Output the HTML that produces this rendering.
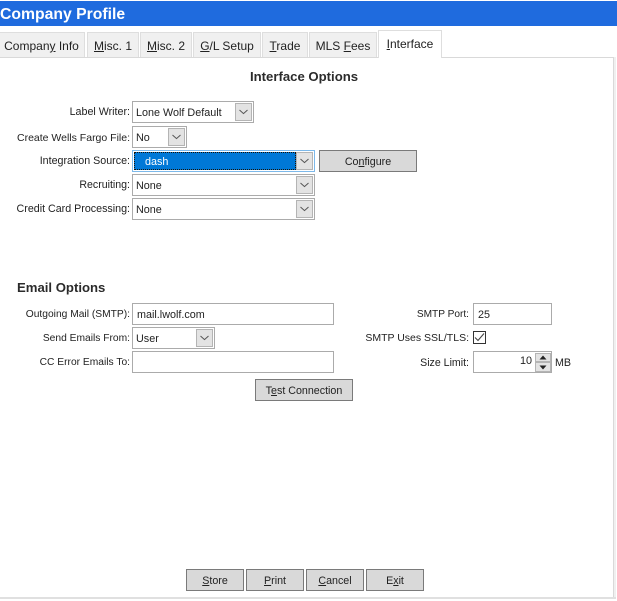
<!DOCTYPE html>
<html><head><meta charset="utf-8">
<style>
html,body{margin:0;padding:0;background:#fff;}
body{width:617px;height:601px;position:relative;overflow:hidden;font-family:"Liberation Sans",Arial,sans-serif;font-size:10.7px;color:#222;}
div{position:absolute;box-sizing:border-box;white-space:nowrap;}
.tab{top:32px;height:25px;background:#f0f0f0;border:1px solid #dedede;border-bottom:none;line-height:27px;text-align:center;font-size:12px;}
.l{right:0;height:16px;line-height:16px;text-align:right;}
.sel,.inp{border:1px solid #ababab;background:#fff;height:22px;line-height:22px;padding-left:3px;font-size:10.8px;}
.ar{right:1px;top:1px;width:17px;height:18px;background:#e3e3e3;border:1px solid #b4b4b4;}
.ar svg{position:absolute;left:3px;top:5px;}
.btn{background:#d9d9d9;border:1px solid #7a7a7a;height:22px;line-height:23px;text-align:center;}
h3{position:absolute;margin:0;font-size:13.15px;font-weight:bold;color:#2b2b2b;white-space:nowrap;line-height:16px;}
</style></head>
<body>
<div style="left:0;top:1px;width:617px;height:25px;background:#1f6bde;color:#fff;font-weight:bold;font-size:15.75px;line-height:27px;">Company Profile</div>

<div style="left:0;top:57px;width:614px;height:541px;border-right:1px solid #d9d9d9;border-top:1px solid #d9d9d9;"></div>
<div style="left:614px;top:57px;width:2px;height:541px;background:#f0f0f0;"></div>
<div style="left:0;top:597px;width:616px;height:2px;background:#e0e0e0;"></div>

<div class="tab" style="left:-2px;width:87px;">Compan<u>y</u> Info</div>
<div class="tab" style="left:87px;width:52px;"><u>M</u>isc. 1</div>
<div class="tab" style="left:140px;width:52px;"><u>M</u>isc. 2</div>
<div class="tab" style="left:193px;width:68px;"><u>G</u>/L Setup</div>
<div class="tab" style="left:262px;width:46px;"><u>T</u>rade</div>
<div class="tab" style="left:309px;width:68px;">MLS <u>F</u>ees</div>
<div class="tab" style="left:378px;top:30px;width:64px;height:28px;background:#fff;line-height:26px;"><u>I</u>nterface</div>

<h3 style="left:250px;top:69px;">Interface Options</h3>

<div class="l" style="left:0;width:130px;top:104px;">Label Writer:</div>
<div class="sel" style="left:132px;top:101px;width:122px;">Lone Wolf Default<div class="ar"><svg width="9" height="6" viewBox="0 0 9 6"><path d="M0.5 1L4.5 4.6L8.5 1" fill="none" stroke="#555" stroke-width="1"/></svg></div></div>

<div class="l" style="left:0;width:130px;top:130px;font-size:10.5px;">Create Wells Fargo File:</div>
<div class="sel" style="left:132px;top:126px;width:55px;">No<div class="ar"><svg width="9" height="6" viewBox="0 0 9 6"><path d="M0.5 1L4.5 4.6L8.5 1" fill="none" stroke="#555" stroke-width="1"/></svg></div></div>

<div class="l" style="left:0;width:130px;top:153px;">Integration Source:</div>
<div class="sel" style="left:132px;top:150px;width:183px;border-color:#7db9ea;padding:0;">
<div style="left:1px;top:1px;width:162px;height:18px;background:#0078d7;border:1px dotted #1a1206;color:#fff;line-height:19px;padding-left:10px;">dash</div>
<div class="ar"><svg width="9" height="6" viewBox="0 0 9 6"><path d="M0.5 1L4.5 4.6L8.5 1" fill="none" stroke="#555" stroke-width="1"/></svg></div></div>

<div class="btn" style="left:319px;top:150px;width:98px;">Co<u>n</u>figure</div>

<div class="l" style="left:0;width:130px;top:177px;font-size:10.6px;">Recruiting:</div>
<div class="sel" style="left:132px;top:174px;width:183px;">None<div class="ar"><svg width="9" height="6" viewBox="0 0 9 6"><path d="M0.5 1L4.5 4.6L8.5 1" fill="none" stroke="#555" stroke-width="1"/></svg></div></div>

<div class="l" style="left:0;width:130px;top:201px;">Credit Card Processing:</div>
<div class="sel" style="left:132px;top:198px;width:183px;">None<div class="ar"><svg width="9" height="6" viewBox="0 0 9 6"><path d="M0.5 1L4.5 4.6L8.5 1" fill="none" stroke="#555" stroke-width="1"/></svg></div></div>

<h3 style="left:17px;top:280px;">Email Options</h3>

<div class="l" style="left:0;width:130px;top:307px;font-size:10.25px;">Outgoing Mail (SMTP):</div>
<div class="inp" style="left:132px;top:303px;width:202px;padding-left:4px;">mail.lwolf.com</div>

<div class="l" style="left:0;width:130px;top:331px;font-size:10.25px;">Send Emails From:</div>
<div class="sel" style="left:132px;top:327px;width:83px;">User<div class="ar"><svg width="9" height="6" viewBox="0 0 9 6"><path d="M0.5 1L4.5 4.6L8.5 1" fill="none" stroke="#555" stroke-width="1"/></svg></div></div>

<div class="l" style="left:0;width:130px;top:355px;font-size:10.25px;">CC Error Emails To:</div>
<div class="inp" style="left:132px;top:351px;width:202px;"></div>

<div class="btn" style="left:255px;top:379px;width:98px;">T<u>e</u>st Connection</div>

<div class="l" style="left:340px;width:129px;top:307px;font-size:10.15px;">SMTP Port:</div>
<div class="inp" style="left:473px;top:303px;width:79px;padding-left:4px;">25</div>

<div class="l" style="left:340px;width:129px;top:330px;font-size:10.5px;">SMTP Uses SSL/TLS:</div>
<div style="left:473px;top:331px;width:13px;height:13px;border:1px solid #333;background:#fff;"><svg style="position:absolute;left:0;top:0" width="11" height="11" viewBox="0 0 11 11"><path d="M1 5.5L4 8.5L10 1.5" fill="none" stroke="#444" stroke-width="1.1"/></svg></div>

<div class="l" style="left:340px;width:129px;top:355px;font-size:10.6px;">Size Limit:</div>
<div class="inp" style="left:473px;top:351px;width:79px;text-align:right;padding:0 19px 0 0;line-height:18px;">10
<div style="left:61px;top:1px;width:16px;height:9px;background:#e3e3e3;border:1px solid #b4b4b4;"><svg style="position:absolute;left:3px;top:1px" width="8" height="5" viewBox="0 0 8 5"><path d="M4 0.5L7.5 4.5H0.5Z" fill="#222"/></svg></div>
<div style="left:61px;top:10px;width:16px;height:10px;background:#e3e3e3;border:1px solid #b4b4b4;"><svg style="position:absolute;left:3px;top:2px" width="8" height="5" viewBox="0 0 8 5"><path d="M4 4.5L7.5 0.5H0.5Z" fill="#222"/></svg></div>
</div>
<div style="left:555px;top:355px;line-height:16px;">MB</div>

<div class="btn" style="left:186px;top:569px;width:58px;"><u>S</u>tore</div>
<div class="btn" style="left:246px;top:569px;width:58px;"><u>P</u>rint</div>
<div class="btn" style="left:306px;top:569px;width:58px;"><u>C</u>ancel</div>
<div class="btn" style="left:366px;top:569px;width:58px;">E<u>x</u>it</div>
</body></html>
